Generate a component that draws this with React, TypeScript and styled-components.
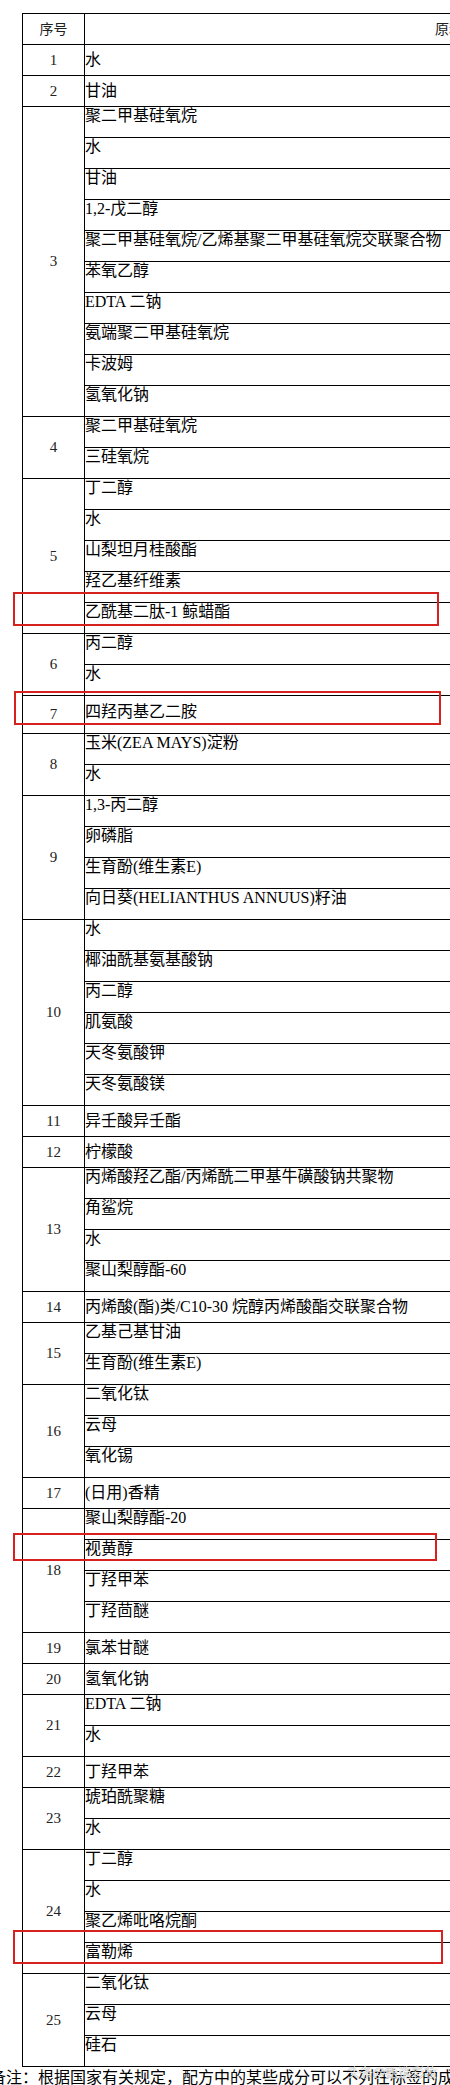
import React from 'react';
import styled, { createGlobalStyle } from 'styled-components';

interface IGroup {
  no: number;
  items: string[];
  tall?: boolean;
}

const GROUPS: IGroup[] = [
  { no: 1, items: ['水'] },
  { no: 2, items: ['甘油'] },
  {
    no: 3,
    items: [
      '聚二甲基硅氧烷',
      '水',
      '甘油',
      '1,2-戊二醇',
      '聚二甲基硅氧烷/乙烯基聚二甲基硅氧烷交联聚合物',
      '苯氧乙醇',
      'EDTA 二钠',
      '氨端聚二甲基硅氧烷',
      '卡波姆',
      '氢氧化钠',
    ],
  },
  { no: 4, items: ['聚二甲基硅氧烷', '三硅氧烷'] },
  { no: 5, items: ['丁二醇', '水', '山梨坦月桂酸酯', '羟乙基纤维素', '乙酰基二肽-1 鲸蜡酯'] },
  { no: 6, items: ['丙二醇', '水'] },
  { no: 7, items: ['四羟丙基乙二胺'], tall: true },
  { no: 8, items: ['玉米(ZEA MAYS)淀粉', '水'] },
  { no: 9, items: ['1,3-丙二醇', '卵磷脂', '生育酚(维生素E)', '向日葵(HELIANTHUS ANNUUS)籽油'] },
  { no: 10, items: ['水', '椰油酰基氨基酸钠', '丙二醇', '肌氨酸', '天冬氨酸钾', '天冬氨酸镁'] },
  { no: 11, items: ['异壬酸异壬酯'] },
  { no: 12, items: ['柠檬酸'] },
  { no: 13, items: ['丙烯酸羟乙酯/丙烯酰二甲基牛磺酸钠共聚物', '角鲨烷', '水', '聚山梨醇酯-60'] },
  { no: 14, items: ['丙烯酸(酯)类/C10-30 烷醇丙烯酸酯交联聚合物'] },
  { no: 15, items: ['乙基己基甘油', '生育酚(维生素E)'] },
  { no: 16, items: ['二氧化钛', '云母', '氧化锡'] },
  { no: 17, items: ['(日用)香精'] },
  { no: 18, items: ['聚山梨醇酯-20', '视黄醇', '丁羟甲苯', '丁羟茴醚'] },
  { no: 19, items: ['氯苯甘醚'] },
  { no: 20, items: ['氢氧化钠'] },
  { no: 21, items: ['EDTA 二钠', '水'] },
  { no: 22, items: ['丁羟甲苯'] },
  { no: 23, items: ['琥珀酰聚糖', '水'] },
  { no: 24, items: ['丁二醇', '水', '聚乙烯吡咯烷酮', '富勒烯'] },
  { no: 25, items: ['二氧化钛', '云母', '硅石'] },
];

// red highlight frames drawn over the table
const MARKS = [
  { top: 592, left: 13, width: 426, height: 34 },
  { top: 691, left: 14, width: 427, height: 34 },
  { top: 1533, left: 13, width: 424, height: 28 },
  { top: 1930, left: 13, width: 430, height: 34 },
];

const GlobalStyle = createGlobalStyle`
  html, body {
    margin: 0;
    padding: 0;
    background: #fff;
    overflow-x: hidden;
  }
`;

const App = () => (
  <>
    <GlobalStyle />
    <Page>
      <Table>
        <HeaderRow>
          <HeaderCell>序号</HeaderCell>
          <HeaderCell>原料名称</HeaderCell>
        </HeaderRow>
        {GROUPS.map((group) => (
          <Group key={group.no}>
            <NumCell>{group.no}</NumCell>
            <Items>
              {group.items.map((item, i) => (
                <Item key={i} $single={group.items.length === 1} $tall={group.tall === true}>
                  {item}
                </Item>
              ))}
            </Items>
          </Group>
        ))}
      </Table>
      <Footer>备注：根据国家有关规定，配方中的某些成分可以不列在标签的成分表中。</Footer>
      {MARKS.map((m, i) => (
        <RedMark key={i} $top={m.top} $left={m.left} $width={m.width} $height={m.height} />
      ))}
      <Watermark>头条@甄选彩妆</Watermark>
    </Page>
  </>
);

export default App;

const Page = styled.div`
  position: relative;
  width: 450px;
  height: 2085px;
  overflow: hidden;
  padding-top: 13px;
  box-sizing: border-box;
`;

const Table = styled.div`
  display: flex;
  flex-direction: column;
  width: 820px;
  margin-left: 22px;
  border-top: 1px solid #000;
  border-left: 1px solid #000;
  color: #000;
`;

const HeaderRow = styled.div`
  display: grid;
  grid-template-columns: 62px 757px;
  height: 31px;
`;

const HeaderCell = styled.div`
  display: flex;
  align-items: center;
  justify-content: center;
  padding-bottom: 3px;
  box-sizing: border-box;
  border-right: 1px solid #000;
  border-bottom: 1px solid #000;
  font-family: 'Noto Sans CJK SC', sans-serif;
  font-size: 14px;
  color: #222;
`;

const Group = styled.div`
  display: grid;
  grid-template-columns: 62px 757px;
`;

const NumCell = styled.div`
  display: flex;
  align-items: center;
  justify-content: center;
  border-right: 1px solid #000;
  border-bottom: 1px solid #000;
  font-family: 'Liberation Serif', serif;
  font-size: 15px;
  color: #222;
`;

const Items = styled.div`
  display: flex;
  flex-direction: column;
`;

const Item = styled.div<{ $single: boolean; $tall: boolean }>`
  display: flex;
  align-items: ${({ $single }) => ($single ? 'center' : 'flex-start')};
  height: ${({ $tall }) => ($tall ? 38 : 31)}px;
  box-sizing: border-box;
  padding: ${({ $single, $tall }) => ($tall ? '0 0 5px 0' : $single ? '0' : '1px 0 0 0')};
  border-right: 1px solid #000;
  border-bottom: 1px solid #000;
  font-family: 'Liberation Serif', 'Noto Sans CJK SC', serif;
  font-size: 16px;
  line-height: 16px;
  white-space: nowrap;
`;

const Footer = styled.div`
  margin-left: -10px;
  font-family: 'Noto Sans CJK SC', sans-serif;
  font-size: 16px;
  line-height: 19px;
  color: #000;
  white-space: nowrap;
`;

const RedMark = styled.div<{ $top: number; $left: number; $width: number; $height: number }>`
  position: absolute;
  top: ${({ $top }) => $top}px;
  left: ${({ $left }) => $left}px;
  width: ${({ $width }) => $width}px;
  height: ${({ $height }) => $height}px;
  box-sizing: border-box;
  border: 2px solid #d6211f;
  pointer-events: none;
`;

const Watermark = styled.div`
  position: absolute;
  top: 2062px;
  left: 347px;
  font-family: 'Noto Sans CJK SC', sans-serif;
  font-size: 13px;
  color: rgba(255, 255, 255, 0.92);
  text-shadow: 0 0 1px rgba(0, 0, 0, 0.6);
  white-space: nowrap;
`;
